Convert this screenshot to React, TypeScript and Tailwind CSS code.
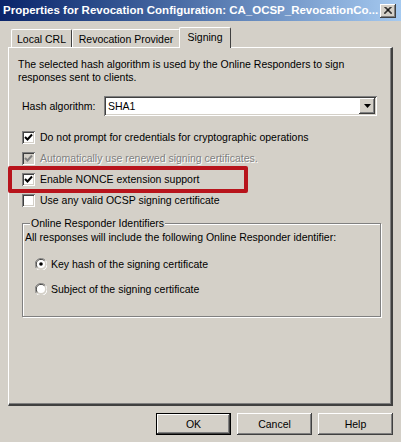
import React from "react";

const raised =
  "shadow-[inset_-1px_-1px_0_#404040,inset_1px_1px_0_#ffffff,inset_-2px_-2px_0_#808080,inset_2px_2px_0_#d4d0c8]";
const sunken =
  "shadow-[inset_1px_1px_0_#808080,inset_-1px_-1px_0_#ffffff,inset_2px_2px_0_#404040,inset_-2px_-2px_0_#d4d0c8]";

function CheckMark({ color }: { color: string }) {
  return (
    <svg width="9" height="9" viewBox="0 0 9 9">
      <path d="M1 4 L3.5 6.5 L8 1.5" fill="none" stroke={color} strokeWidth="2" />
    </svg>
  );
}

function Checkbox({ checked, disabled }: { checked?: boolean; disabled?: boolean }) {
  return (
    <div
      className={`w-[13px] h-[13px] shrink-0 flex items-center justify-center ${sunken} ${
        disabled ? "bg-[#d4d0c8]" : "bg-white"
      }`}
    >
      {checked && <CheckMark color={disabled ? "#808080" : "#000"} />}
    </div>
  );
}

function CheckRow({ label, checked, disabled }: { label: string; checked?: boolean; disabled?: boolean }) {
  return (
    <div className="h-[16px] flex items-center gap-[5px]">
      <Checkbox checked={checked} disabled={disabled} />
      <span className={disabled ? "text-[#808080] [text-shadow:1px_1px_0_#fff]" : ""}>{label}</span>
    </div>
  );
}

function Radio({ checked }: { checked?: boolean }) {
  return (
    <svg width="12" height="12" viewBox="0 0 12 12" className="shrink-0">
      <path d="M10.5 2.5 A5.5 5.5 0 0 0 1.5 10.5" fill="none" stroke="#808080" />
      <path d="M9.5 3 A4.5 4.5 0 0 0 2.5 9.5" fill="none" stroke="#404040" />
      <path d="M1.5 10.5 A5.5 5.5 0 0 0 10.5 2.5" fill="none" stroke="#ffffff" />
      <path d="M2.5 9.5 A4.5 4.5 0 0 0 9.5 3" fill="none" stroke="#d4d0c8" />
      <circle cx="6" cy="6" r="4" fill="#fff" />
      {checked && <circle cx="6" cy="6" r="1.8" fill="#000" />}
    </svg>
  );
}

function Tab({ label, active, w }: { label: string; active?: boolean; w: string }) {
  if (active) {
    return (
      <div
        className={`${w} h-[21px] -mb-px -ml-[1px] relative z-10 bg-[#d4d0c8] border-t border-l border-white border-r border-r-[#404040] rounded-t-[2px] flex justify-center pt-[3px]`}
      >
        {label}
      </div>
    );
  }
  return (
    <div
      className={`${w} h-[18px] bg-[#d4d0c8] border-t border-l border-white border-r border-r-[#404040] rounded-t-[2px] flex justify-center pt-[3px]`}
    >
      {label}
    </div>
  );
}

function Button({ label, isDefault }: { label: string; isDefault?: boolean }) {
  return (
    <div
      className={`w-[75px] h-[22px] flex items-center justify-center ${
        isDefault ? "border border-black" : ""
      } ${raised}`}
    >
      {label}
    </div>
  );
}

export default function App() {
  return (
    <div className="w-[401px] h-[442px] bg-[#d4d0c8] flex flex-col text-black text-[10.5px] leading-[13px] font-['Liberation_Sans',Arial,sans-serif] overflow-hidden">
      <div className="h-[21px] shrink-0 bg-gradient-to-r from-[#0a246a] to-[#a6caf0] flex items-center pl-[3px] pr-[5px]">
        <span className="flex-1 text-white font-bold text-[11.5px] whitespace-nowrap">
          Properties for Revocation Configuration: CA_OCSP_RevocationCo...
        </span>
        <div className={`w-[16px] h-[14px] bg-[#d4d0c8] flex items-center justify-center ${raised}`}>
          <svg width="8" height="7" viewBox="0 0 8 7">
            <path d="M0.5 0 L7.5 7 M1.5 0 L8 6.5 M7.5 0 L0.5 7 M6.5 0 L0 6.5" stroke="#000" strokeWidth="1" />
          </svg>
        </div>
      </div>

      <div className="mt-[6px] h-[20px] flex items-end pl-[11px]">
        <Tab label="Local CRL" w="w-[61px]" />
        <Tab label="Revocation Provider" w="w-[108px]" />
        <Tab label="Signing" active w="w-[52px]" />
      </div>

      <div className="h-[359px] mx-[8px] relative border-t border-l border-white border-r-2 border-b-2 border-r-[#404040] border-b-[#404040] shadow-[inset_-1px_-1px_0_#808080] pt-[10px] pl-[9px]">
        <p className="w-[360px]">
          The selected hash algorithm is used by the Online Responders to sign responses sent to clients.
        </p>

        <div className="pl-[4px]">
          <div className="mt-[12px] flex items-center h-[20px]">
            <span className="w-[82px]">Hash algorithm:</span>
            <div className={`w-[273px] h-[20px] bg-white flex items-center pl-[4px] pr-[2px] ${sunken}`}>
              <span className="flex-1 pt-[1px]">SHA1</span>
              <div className={`w-[16px] h-[16px] bg-[#d4d0c8] flex items-center justify-center ${raised}`}>
                <svg width="7" height="4" viewBox="0 0 7 4">
                  <path d="M0 0 H7 L3.5 4 Z" fill="#000" />
                </svg>
              </div>
            </div>
          </div>

          <div className="mt-[13px] flex flex-col gap-[5px]">
            <CheckRow label="Do not prompt for credentials for cryptographic operations" checked />
            <CheckRow label="Automatically use renewed signing certificates." checked disabled />
            <CheckRow label="Enable NONCE extension support" checked />
            <CheckRow label="Use any valid OCSP signing certificate" />
          </div>

          <div className="mt-[15px] w-[359px] border border-[#808080] shadow-[1px_1px_0_#fff,inset_1px_1px_0_#fff] pl-[2px] pb-[19px]">
            <div className="-mt-[7px] ml-[5px] px-[1px] bg-[#d4d0c8] w-fit">Online Responder Identifiers</div>
            <div className="mt-[1px]">All responses will include the following Online Responder identifier:</div>
            <div className="mt-[12px] pl-[10px] flex flex-col gap-[9px]">
              <div className="h-[16px] flex items-center gap-[4px]">
                <Radio checked />
                <span>Key hash of the signing certificate</span>
              </div>
              <div className="h-[16px] flex items-center gap-[4px]">
                <Radio />
                <span>Subject of the signing certificate</span>
              </div>
            </div>
          </div>
        </div>

        <div className="absolute left-[-1px] top-[118px] w-[240px] h-[27px] border-[4px] border-[#b8141c] rounded-[2px]" />
      </div>

      <div className="mt-[7px] h-[22px] flex justify-end gap-[6px] pr-[8px]">
        <Button label="OK" isDefault />
        <Button label="Cancel" />
        <Button label="Help" />
      </div>
    </div>
  );
}
